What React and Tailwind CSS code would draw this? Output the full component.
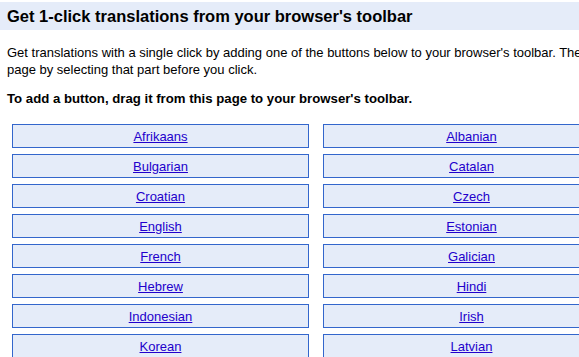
import React from 'react';

const languages = [
  ['Afrikaans', 'Albanian', 'Arabic', 'Belarusian'],
  ['Bulgarian', 'Catalan', 'Chinese (Simplified)', 'Chinese (Traditional)'],
  ['Croatian', 'Czech', 'Danish', 'Dutch'],
  ['English', 'Estonian', 'Filipino', 'Finnish'],
  ['French', 'Galician', 'German', 'Greek'],
  ['Hebrew', 'Hindi', 'Hungarian', 'Icelandic'],
  ['Indonesian', 'Irish', 'Italian', 'Japanese'],
  ['Korean', 'Latvian', 'Lithuanian', 'Macedonian'],
];

const App = () => {
  return (
    <div className="w-screen h-screen overflow-hidden bg-white text-black" style={{ fontFamily: '"Liberation Sans", Arial, sans-serif' }}>
      <div className="w-[1300px] pt-[2px]">
        <h1 className="bg-[#e5ecf9] h-[28px] flex items-center pl-[7px] text-[16.5px] font-bold leading-none">
          Get 1-click translations from your browser's toolbar
        </h1>
        <p className="mt-[14px] ml-[7px] text-[13px] leading-[17px]">
          Get translations with a single click by adding one of the buttons below to your browser's toolbar. Then translate an entire web page or any part of a
          <br />
          page by selecting that part before you click.
        </p>
        <p className="mt-[12px] ml-[7px] text-[13.2px] leading-[17px] font-bold">
          To add a button, drag it from this page to your browser's toolbar.
        </p>
        <div className="mt-[17px] ml-[12px] grid grid-cols-[repeat(4,297px)] gap-x-[14px] gap-y-[6px]">
          {languages.flat().map((lang) => (
            <div
              key={lang}
              className="h-[24px] border border-[#3366cc] bg-[#e5ecf9] flex items-center justify-center"
            >
              <a href="#" className="text-[13px] leading-none text-[#2200cc] underline">
                {lang}
              </a>
            </div>
          ))}
        </div>
      </div>
    </div>
  );
};

export default App;
